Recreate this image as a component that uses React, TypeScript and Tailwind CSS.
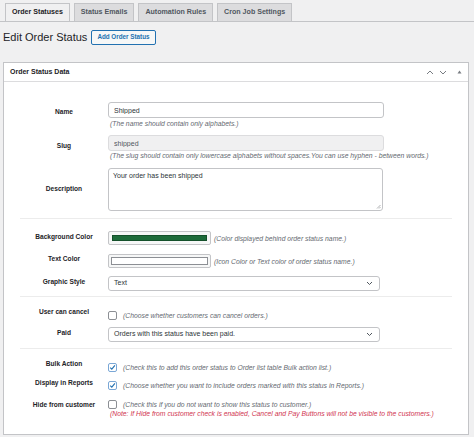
import React from "react";

const Label = ({ children, pt }: { children: React.ReactNode; pt: string }) => (
  <div className={`w-[88px] shrink-0 text-center text-[6.6px] leading-[9px] font-bold text-[#1d2327] ${pt}`}>
    {children}
  </div>
);

const Help = ({ children, className = "" }: { children: React.ReactNode; className?: string }) => (
  <div className={`text-[6.8px] leading-[9px] italic text-[#646970] whitespace-nowrap ${className}`}>{children}</div>
);

const Chevron = () => (
  <svg width="7" height="5" viewBox="0 0 7 5" className="shrink-0">
    <path d="M1 1 L3.5 3.5 L6 1" fill="none" stroke="#50575e" strokeWidth="1" />
  </svg>
);

const Select = ({ value, className }: { value: string; className: string }) => (
  <div
    className={`w-[272px] flex items-center justify-between pl-[5px] pr-[6px] border border-[#c3c4c7] rounded-[3px] bg-white text-[7px] text-[#2c3338] ${className}`}
  >
    <span>{value}</span>
    <Chevron />
  </div>
);

const Checkbox = ({ checked }: { checked?: boolean }) => (
  <div
    className={`w-[9px] h-[9px] shrink-0 rounded-[2px] border bg-white flex items-center justify-center ${
      checked ? "border-[#7aa7d6]" : "border-[#8c8f94]"
    }`}
  >
    {checked && (
      <svg width="7" height="7" viewBox="0 0 7 7">
        <path d="M1.2 3.6 L2.8 5.2 L5.9 1.4" fill="none" stroke="#2271b1" strokeWidth="1.1" />
      </svg>
    )}
  </div>
);

const Sep = ({ className }: { className: string }) => <div className={`h-px bg-[#ececec] ${className}`} />;

export default function App() {
  const tabs = ["Order Statuses", "Status Emails", "Automation Rules", "Cron Job Settings"];
  return (
    <div className="min-h-[437px] bg-[#f0f0f1] pt-[3px] font-['Liberation_Sans',Arial,sans-serif] text-[#1d2327]">
      <nav className="flex items-end gap-[4px] pl-[5px] border-b border-[#c3c4c7]">
        {tabs.map((t, i) => (
          <div
            key={t}
            className={`h-[18px] px-[6px] flex items-center border border-b-0 border-[#c3c4c7] text-[7.1px] font-bold ${
              i === 0 ? "bg-[#f0f0f1] text-[#1d2327]" : "bg-[#dcdcde] text-[#50575e]"
            }`}
          >
            {t}
          </div>
        ))}
      </nav>

      <div className="mt-[8px] pl-[3px] flex items-center gap-[4px]">
        <h1 className="text-[11px] leading-[15px] font-normal text-[#1d2327]">Edit Order Status</h1>
        <button className="h-[15px] px-[5px] border border-[#2271b1] rounded-[2px] bg-[#f6f7f7] text-[#2271b1] text-[6.3px] font-bold leading-none">
          Add Order Status
        </button>
      </div>

      <div className="mt-[17px] ml-[3px] mr-[5px] bg-white border border-[#c3c4c7]">
        <div className="h-[19px] flex items-center justify-between pl-[6px] pr-[6px] border-b border-[#dcdcde]">
          <span className="text-[7px] font-bold text-[#1d2327]">Order Status Data</span>
          <div className="flex items-center">
            <svg width="8" height="5" viewBox="0 0 8 5">
              <path d="M1 4 L4 1 L7 4" fill="none" stroke="#787c82" strokeWidth="1" />
            </svg>
            <svg width="8" height="5" viewBox="0 0 8 5" className="ml-[5px]">
              <path d="M1 1 L4 4 L7 1" fill="none" stroke="#787c82" strokeWidth="1" />
            </svg>
            <svg width="5" height="4" viewBox="0 0 5 4" className="ml-[10px]">
              <path d="M0.5 3.5 L2.5 0.5 L4.5 3.5 Z" fill="#787c82" />
            </svg>
          </div>
        </div>

        <div className="pl-[16px] pr-[16px] pt-[20px] pb-[16px]">
          {/* Name */}
          <div className="flex">
            <Label pt="pt-[4.5px]">Name</Label>
            <div>
              <input
                readOnly
                value="Shipped"
                className="block w-[276px] h-[16px] px-[5px] border border-[#c3c4c7] rounded-[3px] bg-white text-[7px] text-[#2c3338] outline-none"
              />
              <Help className="mt-[1px] pl-[2px]">(The name should contain only alphabets.)</Help>
            </div>
          </div>

          {/* Slug */}
          <div className="flex mt-[7px]">
            <Label pt="pt-[5.5px]">Slug</Label>
            <div>
              <input
                readOnly
                value="shipped"
                className="block w-[276px] h-[16px] px-[5px] border border-[#dcdcde] rounded-[3px] bg-[#f0f0f1] text-[7px] text-[#50575e] outline-none"
              />
              <Help className="pl-[2px]">
                (The slug should contain only lowercase alphabets without spaces.You can use hyphen - between words.)
              </Help>
            </div>
          </div>

          {/* Description */}
          <div className="flex mt-[8px]">
            <Label pt="pt-[15.5px]">Description</Label>
            <div className="relative w-[275px] h-[43px] border border-[#c3c4c7] rounded-[3px] bg-white px-[4px] pt-[2px] text-[7px] leading-[9px] text-[#2c3338]">
              Your order has been shipped
              <svg width="5" height="5" viewBox="0 0 5 5" className="absolute right-[1px] bottom-[1px]">
                <path d="M4.5 1 L1 4.5 M4.5 3 L3 4.5" stroke="#8c8f94" strokeWidth="0.7" />
              </svg>
            </div>
          </div>

          <Sep className="mt-[7px]" />

          {/* Background Color */}
          <div className="flex mt-[12px]">
            <Label pt="pt-[0.5px]">Background Color</Label>
            <div className="flex items-center gap-[3px]">
              <div className="w-[103px] h-[14px] p-[3px] border border-[#c3c4c7] rounded-[2px] bg-[#f6f7f7]">
                <div className="w-full h-full bg-[#1d6b3a] border border-[#14502a]" />
              </div>
              <Help>(Color displayed behind order status name.)</Help>
            </div>
          </div>

          {/* Text Color */}
          <div className="flex mt-[9px]">
            <Label pt="pt-0">Text Color</Label>
            <div className="flex items-center gap-[3px]">
              <div className="w-[103px] h-[14px] p-[2px] border border-[#c3c4c7] rounded-[2px] bg-[#f6f7f7]">
                <div className="w-full h-full bg-white border border-[#8c8f94]" />
              </div>
              <Help>(Icon Color or Text color of order status name.)</Help>
            </div>
          </div>

          {/* Graphic Style */}
          <div className="flex mt-[8px]">
            <Label pt="pt-[1px]">Graphic Style</Label>
            <Select value="Text" className="h-[15px]" />
          </div>

          <Sep className="mt-[5px]" />

          {/* User can cancel */}
          <div className="flex mt-[10px]">
            <Label pt="pt-0">User can cancel</Label>
            <div className="flex items-center gap-[6px] pt-[4px]">
              <Checkbox />
              <Help>(Choose whether customers can cancel orders.)</Help>
            </div>
          </div>

          {/* Paid */}
          <div className="flex mt-[7px]">
            <Label pt="pt-[1px]">Paid</Label>
            <Select value="Orders with this status have been paid." className="h-[15px]" />
          </div>

          <Sep className="mt-[6px]" />

          {/* Bulk Action */}
          <div className="flex mt-[10px]">
            <Label pt="pt-0">Bulk Action</Label>
            <div className="flex items-center gap-[6px] pt-[3.5px]">
              <Checkbox checked />
              <Help>(Check this to add this order status to Order list table Bulk action list.)</Help>
            </div>
          </div>

          {/* Display in Reports */}
          <div className="flex mt-[6px]">
            <Label pt="pt-0">Display in Reports</Label>
            <div className="flex items-center gap-[6px] pt-[3px]">
              <Checkbox checked />
              <Help>(Choose whether you want to include orders marked with this status in Reports.)</Help>
            </div>
          </div>

          {/* Hide from customer */}
          <div className="flex mt-[10px]">
            <Label pt="pt-[0.5px]">Hide from customer</Label>
            <div>
              <div className="flex items-center gap-[6px]">
                <Checkbox />
                <Help>(Check this if you do not want to show this status to customer.)</Help>
              </div>
              <div className="text-[6.8px] leading-[9px] italic text-[#d0344f] whitespace-nowrap pl-[2px]">
                (Note: If Hide from customer check is enabled, Cancel and Pay Buttons will not be visible to the customers.)
              </div>
            </div>
          </div>
        </div>
      </div>
    </div>
  );
}
